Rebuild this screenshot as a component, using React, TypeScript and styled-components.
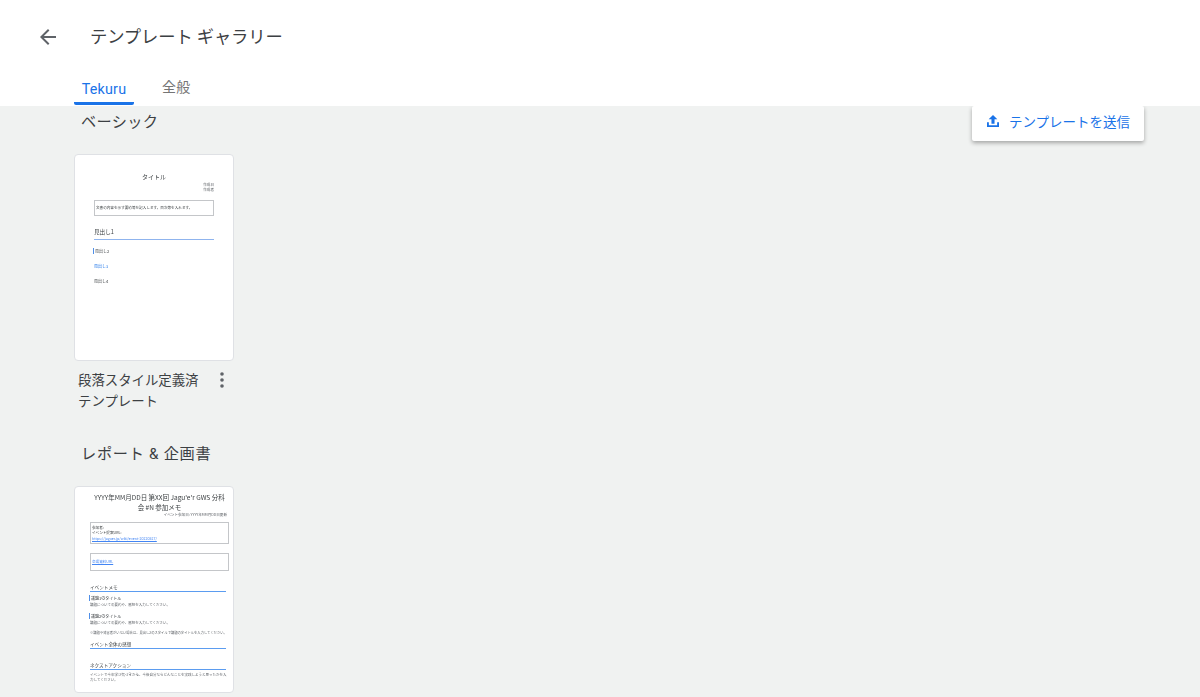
import React from "react";
import styled, { createGlobalStyle } from "styled-components";

const Global = createGlobalStyle`
  html, body { margin: 0; padding: 0; height: 100%; overflow: hidden; background: #f0f2f1; }
  #root { height: 697px; }
  * { box-sizing: border-box; }
  body { font-family: Roboto, "Noto Sans CJK JP", sans-serif; }
`;

const Page = styled.div`
  height: 697px;
  display: flex;
  flex-direction: column;
  overflow: hidden;
  font-family: Roboto, "Noto Sans CJK JP", sans-serif;
`;
const Header = styled.header`
  height: 106px;
  flex: none;
  background: #fff;
  display: flex;
  flex-direction: column;
`;
const TitleRow = styled.div`
  height: 70px;
  padding: 3px 0 0 36px;
  display: flex;
  align-items: center;
`;
const BackButton = styled.button`
  width: 24px;
  height: 24px;
  padding: 0;
  border: 0;
  background: none;
  display: flex;
  margin-right: 30px;
`;
const PageTitle = styled.h1`
  margin: -3px 0 0;
  font-size: 17.3px;
  font-weight: 400;
  letter-spacing: -0.1px;
  color: #3c4043;
`;
const Tabs = styled.nav`
  display: flex;
  padding-left: 74px;
  height: 36px;
`;
const Tab = styled.div<{ $active?: boolean }>`
  height: 35px;
  padding: ${(p) => (p.$active ? "10px 7px 0" : "8px 0 0")};
  margin-left: ${(p) => (p.$active ? "0" : "28px")};
  width: ${(p) => (p.$active ? "60px" : "auto")};
  text-align: center;
  font-size: ${(p) => (p.$active ? "14.3px" : "14px")};
  line-height: 18px;
  letter-spacing: 0.2px;
  color: ${(p) => (p.$active ? "#1a73e8" : "#757575")};
  border-bottom: ${(p) => (p.$active ? "3px solid #1a73e8" : "0")};
  border-radius: 0 0 2px 2px;
`;
const Content = styled.main`
  position: relative;
  flex: 1;
  min-height: 0;
  overflow: hidden;
  padding-left: 74px;
  background: #f0f2f1;
`;
const UploadButton = styled.button`
  position: absolute;
  top: 0;
  left: 972px;
  width: 172px;
  height: 35px;
  border: 0;
  border-radius: 2px;
  background: #fff;
  box-shadow: 0 2px 4px rgba(0, 0, 0, 0.32);
  display: flex;
  align-items: center;
  gap: 8px;
  padding: 0 0 5px 13px;
  font: 400 13.5px Roboto, "Noto Sans CJK JP", sans-serif;
  color: #1a73e8;
  white-space: nowrap;
`;
const SectionTitle = styled.h2<{ $indent: number; $spacing: number }>`
  margin: 0;
  padding: 1px 0 0 ${(p) => p.$indent}px;
  font-size: 15.2px;
  font-weight: 400;
  line-height: 30px;
  letter-spacing: ${(p) => p.$spacing}px;
  color: #3c4043;
`;
const Basic = styled.section`
  height: 332px;
`;
const Reports = styled.section``;
const Thumb = styled.div<{ $pad: string }>`
  width: 160px;
  height: 207px;
  margin-top: 17px;
  background: #fff;
  border: 1px solid #dfe1e5;
  border-radius: 4px;
  padding: ${(p) => p.$pad};
  overflow: hidden;
  font-family: "Noto Sans CJK JP", sans-serif;
`;
const DocPage = styled.div`
  display: flex;
  flex-direction: column;
  color: #5f6368;
  filter: blur(0.25px);
`;
const CardFoot = styled.div`
  width: 160px;
  padding: 9px 0 0 4px;
  display: flex;
  justify-content: space-between;
`;
const CardName = styled.div`
  width: 124px;
  font-size: 13.4px;
  line-height: 21px;
  color: #3c4043;
`;
const More = styled.button`
  width: 16px;
  height: 20px;
  margin: 0 4px 0 0;
  padding: 0;
  border: 0;
  background: none;
  display: flex;
`;
const DocTitle = styled.div<{ $size: number; $lh: number; $px?: number }>`
  font-size: ${(p) => p.$size}px;
  line-height: ${(p) => p.$lh}px;
  padding: 0 ${(p) => p.$px ?? 0}px;
  text-align: center;
  color: #3c4043;
`;
const DocRight = styled.div<{ $mr?: number }>`
  font-size: 3.6px;
  line-height: 5px;
  text-align: right;
  margin-right: ${(p) => p.$mr ?? 0}px;
  white-space: nowrap;
`;
const DocBox = styled.div<{ $h: number; $mt: number }>`
  height: ${(p) => p.$h}px;
  margin-top: ${(p) => p.$mt}px;
  border: 1px solid #c4c6c9;
  padding: 1px 1px;
  font-size: 3.6px;
  line-height: 5.5px;
  white-space: nowrap;
  color: #3c4043;
  display: flex;
  flex-direction: column;
  justify-content: center;
`;
const DocH1 = styled.div<{ $mt: number; $size: number; $pb: number; $mr?: number; $line: string }>`
  margin-top: ${(p) => p.$mt}px;
  margin-right: ${(p) => p.$mr ?? 0}px;
  font-size: ${(p) => p.$size}px;
  line-height: 7px;
  padding-bottom: ${(p) => p.$pb}px;
  border-bottom: 1px solid ${(p) => p.$line};
  color: #3c4043;
`;
const DocH2 = styled.div<{ $mt: number }>`
  margin-top: ${(p) => p.$mt}px;
  font-size: 4px;
  line-height: 6px;
  color: #3c4043;
  border-left: 1px solid #4f8fe8;
  margin-left: -1px;
  padding-left: 1px;
`;
const DocH3 = styled.div<{ $mt: number; $link?: boolean }>`
  margin-top: ${(p) => p.$mt}px;
  font-size: 4px;
  line-height: 6px;
  color: ${(p) => (p.$link ? "#1a73e8" : "#3c4043")};
`;
const DocBody = styled.div<{ $mt?: number; $wrap?: boolean; $size?: number }>`
  margin-top: ${(p) => p.$mt ?? 0}px;
  font-size: ${(p) => p.$size ?? 3.5}px;
  line-height: 5.2px;
  color: #5f6368;
  white-space: ${(p) => (p.$wrap ? "normal" : "nowrap")};
`;
const DocLink = styled.span`
  color: #4285f4;
  text-decoration: underline;
`;

const ArrowBack = () => (
  <svg width="24" height="24" viewBox="0 0 24 24" fill="#5f6368">
    <path d="M20 11H7.83l5.59-5.59L12 4l-8 8 8 8 1.41-1.41L7.83 13H20v-2z" />
  </svg>
);
const UploadIcon = () => (
  <svg width="16" height="16" viewBox="0 0 24 24" fill="#1a73e8">
    <path d="M3 14h2.8v4.2h12.4V14H21v7H3z" />
    <path d="M12 3l-6.5 6.5h4.2V16h4.6V9.500h4.200z" />
  </svg>
);
const MoreIcon = () => (
  <svg width="16" height="20" viewBox="0 0 16 20" fill="#5f6368">
    <circle cx="8" cy="4" r="1.8" />
    <circle cx="8" cy="10" r="1.8" />
    <circle cx="8" cy="16" r="1.8" />
  </svg>
);

export default function App() {
  return (
    <Page>
      <Global />
      <Header>
        <TitleRow>
          <BackButton aria-label="戻る">
            <ArrowBack />
          </BackButton>
          <PageTitle>テンプレート ギャラリー</PageTitle>
        </TitleRow>
        <Tabs>
          <Tab $active>Tekuru</Tab>
          <Tab>全般</Tab>
        </Tabs>
      </Header>
      <Content>
        <UploadButton>
          <UploadIcon />
          テンプレートを送信
        </UploadButton>
        <Basic>
          <SectionTitle $indent={7} $spacing={0.35}>ベーシック</SectionTitle>
          <Thumb $pad="17px 19px 0">
            <DocPage>
              <DocTitle $size={6} $lh={10}>タイトル</DocTitle>
              <DocRight>作成日</DocRight>
              <DocRight>作成者</DocRight>
              <DocBox $h={16} $mt={8}>文書の内容を示す要約等を記入します。目次等を入れます。</DocBox>
              <DocH1 $mt={13} $size={5.6} $pb={3} $line="#8fb4ee">見出し1</DocH1>
              <DocH2 $mt={8}>見出し2</DocH2>
              <DocH3 $mt={9} $link>見出し3</DocH3>
              <DocH3 $mt={9}>見出し4</DocH3>
            </DocPage>
          </Thumb>
          <CardFoot>
            <CardName>段落スタイル定義済テンプレート</CardName>
            <More aria-label="その他">
              <MoreIcon />
            </More>
          </CardFoot>
        </Basic>
        <Reports>
          <SectionTitle $indent={7} $spacing={0.7}>レポート &amp; 企画書</SectionTitle>
          <Thumb $pad="5px 4px 0 15px">
            <DocPage>
              <DocTitle $size={6.5} $lh={10} $px={2}>YYYY年MM月DD日 第XX回 Jagu'e'r GWS 分科会 #N 参加メモ</DocTitle>
              <DocRight $mr={2}>イベント参加日: YYYY年MM月DD日更新</DocRight>
              <DocBox $h={22} $mt={5}>
                <span>参加者:</span>
                <span>イベント提案URL:</span>
                <DocLink>https://jaguer.jp/wiki/event-20220527/</DocLink>
              </DocBox>
              <DocBox $h={18} $mt={9}>
                <DocLink>会場資料URL</DocLink>
              </DocBox>
              <DocH1 $mt={13} $size={4.6} $pb={0} $mr={3} $line="#5b9cf0">イベントメモ</DocH1>
              <DocH2 $mt={3}>議題1のタイトル</DocH2>
              <DocBody $mt={1}>議題についての要約や、感想を入力してください。</DocBody>
              <DocH2 $mt={6}>議題2のタイトル</DocH2>
              <DocBody $mt={1}>議題についての要約や、感想を入力してください。</DocBody>
              <DocBody $mt={5} $size={3.3}>※議題や発言者がいない場合は、見出し2のスタイルで議題のタイトルを入力してください。</DocBody>
              <DocH1 $mt={5} $size={4.6} $pb={0} $mr={3} $line="#5b9cf0">イベント全体の感想</DocH1>
              <DocH1 $mt={13} $size={4.6} $pb={0} $mr={3} $line="#5b9cf0">ネクストアクション</DocH1>
              <DocBody $mt={2} $wrap>イベントで今年学び気づきから、今後自分ならどんなことを実践しようと思ったかを入力してください。</DocBody>
            </DocPage>
          </Thumb>
        </Reports>
      </Content>
    </Page>
  );
}
